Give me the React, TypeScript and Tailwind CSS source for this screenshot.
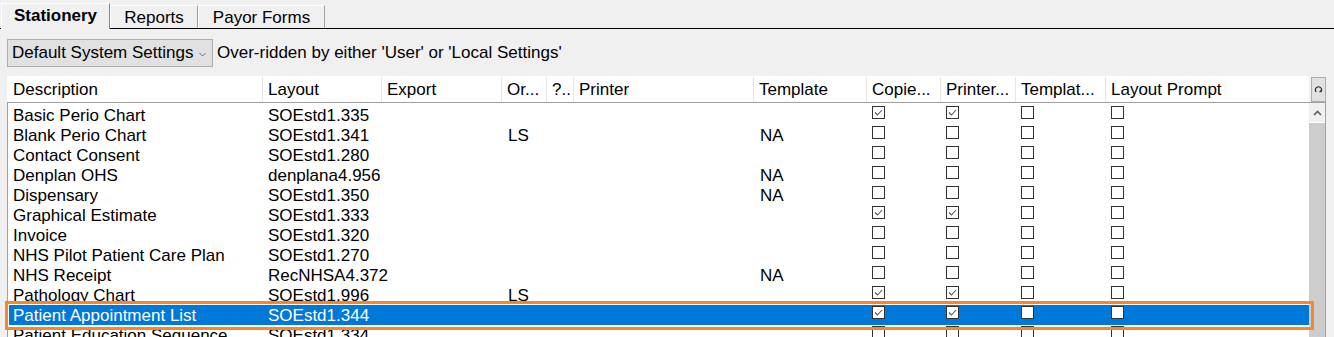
import React from "react";

type Row = {
  d: string;
  l: string;
  o?: string;
  t?: string;
  c1?: boolean;
  c2?: boolean;
  sel?: boolean;
};

const rows: Row[] = [
  { d: "Basic Perio Chart", l: "SOEstd1.335", c1: true, c2: true },
  { d: "Blank Perio Chart", l: "SOEstd1.341", o: "LS", t: "NA" },
  { d: "Contact Consent", l: "SOEstd1.280" },
  { d: "Denplan OHS", l: "denplana4.956", t: "NA" },
  { d: "Dispensary", l: "SOEstd1.350", t: "NA" },
  { d: "Graphical Estimate", l: "SOEstd1.333", c1: true, c2: true },
  { d: "Invoice", l: "SOEstd1.320" },
  { d: "NHS Pilot Patient Care Plan", l: "SOEstd1.270" },
  { d: "NHS Receipt", l: "RecNHSA4.372", t: "NA" },
  { d: "Pathology Chart", l: "SOEstd1.996", o: "LS", c1: true, c2: true },
  { d: "Patient Appointment List", l: "SOEstd1.344", c1: true, c2: true, sel: true },
  { d: "Patient Education Sequence", l: "SOEstd1.334" },
];

function Check({ on }: { on?: boolean }) {
  return (
    <div className="w-[13px] h-[13px] border border-[#333333] bg-white flex items-center justify-center">
      {on && (
        <svg width="11" height="11" viewBox="0 0 11 11">
          <path d="M2 5.5 L4.5 8 L9 3" fill="none" stroke="#555555" strokeWidth="1.1" />
        </svg>
      )}
    </div>
  );
}

export default function App() {
  return (
    <div className="relative w-[1334px] h-[337px] overflow-hidden bg-[#f0f0f0] text-black font-['Liberation_Sans',Arial,sans-serif] text-[17px] flex flex-col">
      {/* Tabs */}
      <div className="flex items-end h-[29px] border-b border-black pl-px shrink-0">
        <div className="relative z-10 -mb-px w-[109px] h-[26px] bg-[#f0f0f0] border-t border-l border-white border-r border-r-[#8a8a8a] flex justify-center pt-[2px] leading-[20px] font-bold">
          Stationery
        </div>
        <div className="w-[88px] h-[23px] border-t border-l border-white border-r border-r-[#a0a0a0] flex justify-center pt-[2px] leading-[20px]">
          Reports
        </div>
        <div className="w-[127px] h-[23px] border-t border-l border-white border-r border-r-[#a0a0a0] flex justify-center pt-[2px] leading-[20px]">
          Payor Forms
        </div>
      </div>

      {/* Combo row */}
      <div className="flex items-center mt-[10px] ml-[7px] shrink-0">
        <div className="w-[206px] h-[28px] bg-[#e1e1e1] border border-[#adadad] flex items-center pl-[4px] leading-[20px]">
          <span className="flex-1">Default System Settings</span>
          <svg width="7" height="5" viewBox="0 0 7 5" className="mr-[6px] mt-[2px]">
            <path d="M0.5 1 L3.5 4 L6.5 1" fill="none" stroke="#707070" strokeWidth="1" />
          </svg>
        </div>
        <span className="ml-[4px] leading-[20px]">Over-ridden by either 'User' or 'Local Settings'</span>
      </div>

      {/* Header */}
      <div className="flex mt-[9px] ml-[7px] h-[26px] shrink-0">
        <div className="w-[1302px] h-[26px] bg-white flex pl-px leading-[26px] pt-px">
          <div className="w-[255px] border-r border-[#e5e5e5] pl-[5px]">Description</div>
          <div className="w-[119px] border-r border-[#e5e5e5] pl-[5px]">Layout</div>
          <div className="w-[120px] border-r border-[#e5e5e5] pl-[5px]">Export</div>
          <div className="w-[45px] border-r border-[#e5e5e5] pl-[5px] overflow-hidden whitespace-nowrap">Or...</div>
          <div className="w-[27px] border-r border-[#e5e5e5] pl-[5px] overflow-hidden whitespace-nowrap">?..</div>
          <div className="w-[180px] border-r border-[#e5e5e5] pl-[5px]">Printer</div>
          <div className="w-[113px] border-r border-[#e5e5e5] pl-[5px]">Template</div>
          <div className="w-[74px] border-r border-[#e5e5e5] pl-[5px] whitespace-nowrap">Copie...</div>
          <div className="w-[75px] border-r border-[#e5e5e5] pl-[5px] whitespace-nowrap">Printer...</div>
          <div className="w-[90px] border-r border-[#e5e5e5] pl-[5px] whitespace-nowrap">Templat...</div>
          <div className="flex-1 pl-[5px] whitespace-nowrap">Layout Prompt</div>
        </div>
        <div className="ml-[2px] mt-px w-[15px] h-[25px] bg-[#e1e1e1] border border-[#adadad] flex items-center justify-center">
          <svg width="9" height="9" viewBox="0 0 9 9">
            <path d="M2.2 6.8 A3 3 0 1 1 6.8 6.8" fill="none" stroke="#222222" strokeWidth="1.1" />
            <path d="M6.8 6.8 L6.8 5.2 M6.8 6.8 L5.3 6.8" fill="none" stroke="#222222" strokeWidth="1" />
          </svg>
        </div>
      </div>

      {/* Body */}
      <div className="ml-[7px] w-[1319px] flex-1 border-t border-l border-r border-[#a0a0a0] bg-white flex overflow-hidden">
        <div className="flex-1 pt-[2px] pl-px leading-[20px]">
          {rows.map((r, i) => (
            <div
              key={i}
              className={
                "flex h-[20px] whitespace-nowrap " +
                (r.sel ? "bg-[#0078d7] text-white" : "")
              }
            >
              <div className="w-[254px] pl-[4px] pt-px">{r.d}</div>
              <div className="w-[119px] pl-[5px] pt-px">{r.l}</div>
              <div className="w-[120px]"></div>
              <div className="w-[45px] pl-[6px] pt-px">{r.o}</div>
              <div className="w-[27px]"></div>
              <div className="w-[180px]"></div>
              <div className="w-[113px] pl-[6px] pt-px">{r.t}</div>
              <div className="w-[74px] pl-[5px] pt-px"><Check on={r.c1} /></div>
              <div className="w-[75px] pl-[5px] pt-px"><Check on={r.c2} /></div>
              <div className="w-[90px] pl-[5px] pt-px"><Check /></div>
              <div className="flex-1 pl-[5px] pt-px"><Check /></div>
            </div>
          ))}
        </div>
        <div className="w-[16px] flex flex-col">
          <div className="h-[19px] bg-[#f0f0f0] flex items-center justify-center">
            <svg width="9" height="6" viewBox="0 0 9 6">
              <path d="M1 5 L4.5 1.5 L8 5" fill="none" stroke="#606060" strokeWidth="1.6" />
            </svg>
          </div>
          <div className="flex-1 bg-[#cdcdcd] mt-px"></div>
        </div>
      </div>

      {/* Annotation overlay */}
      <div className="absolute left-[5px] top-[301px] w-[1309px] h-[29px] border-[3px] border-[#f7882a] pointer-events-none"></div>
    </div>
  );
}
